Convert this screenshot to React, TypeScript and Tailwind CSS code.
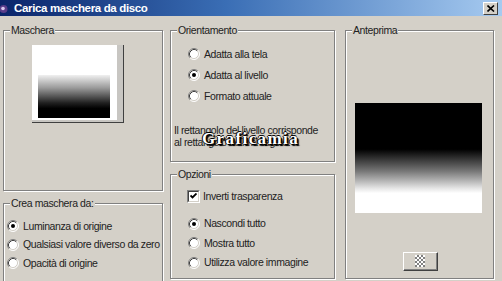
import React from "react";

const Radio = ({ checked = false }: { checked?: boolean }) => (
  <svg width="12" height="12" viewBox="0 0 12 12" className="shrink-0">
    <circle cx="6" cy="6" r="5" fill="#fff" />
    <path d="M2.11 9.89 A5.5 5.5 0 0 1 9.89 2.11" stroke="#808080" fill="none" />
    <path d="M2.82 9.18 A4.5 4.5 0 0 1 9.18 2.82" stroke="#404040" fill="none" />
    <path d="M9.89 2.11 A5.5 5.5 0 0 1 2.11 9.89" stroke="#fff" fill="none" />
    <path d="M9.18 2.82 A4.5 4.5 0 0 1 2.82 9.18" stroke="#d4d0c8" fill="none" />
    {checked && <circle cx="6" cy="6" r="2" fill="#000" />}
  </svg>
);

const Check = () => (
  <div className="w-[13px] h-[13px] shrink-0 border border-t-[#808080] border-l-[#808080] border-r-white border-b-white">
    <div className="w-full h-full border border-t-[#404040] border-l-[#404040] border-r-[#d4d0c8] border-b-[#d4d0c8] bg-white flex items-center justify-center">
      <svg width="7" height="7" viewBox="0 0 7 7">
        <path d="M0.5 2.5 L2.5 4.5 L6.5 0.5" stroke="#000" strokeWidth="1.8" fill="none" />
      </svg>
    </div>
  </div>
);

const Group = ({
  label,
  className,
  children,
}: {
  label: string;
  className: string;
  children?: React.ReactNode;
}) => (
  <div
    className={`relative border border-[#808080] shadow-[inset_1px_1px_0_#fff,1px_1px_0_#fff] ${className}`}
  >
    <span className="absolute left-[6px] top-[-7px] px-[1px] bg-[#d4d0c8] leading-[13px] whitespace-nowrap">
      {label}
    </span>
    {children}
  </div>
);

const Opt = ({
  children,
  checked = false,
  h,
  gap,
}: {
  children: React.ReactNode;
  checked?: boolean;
  h: string;
  gap: string;
}) => (
  <div className={`flex items-center ${h} ${gap} whitespace-nowrap`}>
    <Radio checked={checked} />
    <span className="leading-[13px]">{children}</span>
  </div>
);

export default function App() {
  return (
    <div className="w-[502px] h-[281px] overflow-hidden bg-[#d4d0c8] text-[#222] text-[10.5px] tracking-[-0.4px] font-['Liberation_Sans',Arial,sans-serif]">
      {/* Title bar */}
      <div className="h-[16px] flex items-center bg-[linear-gradient(to_right,#0a246a_0%,#3a6eb5_45%,#a6caf0_100%)]">
        <svg width="9" height="10" viewBox="0 0 9 10" className="shrink-0 mt-[1px]">
          <circle cx="3.5" cy="5" r="4" fill="#5a3d8a" />
          <circle cx="3" cy="4.5" r="1.8" fill="#d8c8f0" />
        </svg>
        <span className="ml-[5px] text-white font-bold text-[11.5px] tracking-[-0.35px] leading-[14px]">
          Carica maschera da disco
        </span>
        <div className="ml-auto mr-[4px] w-[15px] h-[13px] bg-[#d4d0c8] border border-t-white border-l-white border-r-[#404040] border-b-[#404040] flex items-center justify-center">
          <svg width="8" height="7" viewBox="0 0 8 7">
            <path d="M0.5 0.5 L7 6.5 M7 0.5 L0.5 6.5" stroke="#000" strokeWidth="1.6" />
          </svg>
        </div>
      </div>

      {/* Body */}
      <div className="flex pl-[3px] pt-[14px]">
        {/* Column 1 */}
        <div className="w-[160px] flex flex-col shrink-0">
          <Group label="Maschera" className="h-[161px] pl-[28px] pt-[14px]">
            <div className="w-[92px] h-[78px] bg-white border-r border-b border-r-[#404040] border-b-[#404040]">
              <div className="w-full h-full border-r-[6px] border-b-[2px] border-r-[#c8c6c2] border-b-[#c8c6c2] pl-[6px] pt-[30px]">
                <div className="w-[72px] h-[43px] bg-[linear-gradient(to_bottom,#f0f0f0_0%,#9a9a9a_30%,#202020_65%,#000_78%,#000_100%)]" />
              </div>
            </div>
          </Group>
          <Group label="Crea maschera da:" className="mt-[12px] h-[100px] pl-[3px] pt-[13px]">
            <Opt checked h="h-[18.5px]" gap="gap-[4px]">Luminanza di origine</Opt>
            <Opt h="h-[18.5px]" gap="gap-[4px]">Qualsiasi valore diverso da zero</Opt>
            <Opt h="h-[18.5px]" gap="gap-[4px]">Opacità di origine</Opt>
          </Group>
        </div>

        {/* Column 2 */}
        <div className="ml-[7px] w-[165px] flex flex-col shrink-0">
          <Group label="Orientamento" className="h-[132px] pl-[17px] pt-[12.5px]">
            <Opt h="h-[21px]" gap="gap-[4px]">Adatta alla tela</Opt>
            <Opt checked h="h-[21px]" gap="gap-[4px]">Adatta al livello</Opt>
            <Opt h="h-[21px]" gap="gap-[4px]">Formato attuale</Opt>
            <p className="ml-[-14px] mt-[17px] leading-[12px] whitespace-nowrap">
              Il rettangolo del livello corrisponde
              <br />
              al rettangolo dell'immagine.
            </p>
            <span className="absolute left-[31px] top-[99px] text-white font-bold text-[17px] tracking-[1.4px] leading-[17px] font-['Liberation_Serif',serif] [text-shadow:1px_1px_0_#000,-1px_0_0_#000,0_-1px_0_#000,2px_2px_1px_#000]">
              Graficamia
            </span>
          </Group>
          <Group label="Opzioni" className="mt-[12px] h-[105px] pl-[16px] pt-[11px]">
            <div className="flex items-center h-[20px] gap-[3px] whitespace-nowrap">
              <Check />
              <span className="leading-[13px]">Inverti trasparenza</span>
            </div>
            <div className="h-[8px]" />
            <div className="pl-[1px]">
              <Opt checked h="h-[19.5px]" gap="gap-[4px]">Nascondi tutto</Opt>
              <Opt h="h-[19.5px]" gap="gap-[4px]">Mostra tutto</Opt>
              <Opt h="h-[19.5px]" gap="gap-[4px]">Utilizza valore immagine</Opt>
            </div>
          </Group>
        </div>

        {/* Column 3 */}
        <div className="ml-[10px] w-[149px] shrink-0">
          <Group label="Anteprima" className="h-[249px] pl-[9px] pt-[72px]">
            <div className="w-[127px] h-[110px] bg-[linear-gradient(to_bottom,#000_0%,#000_42%,#777_62%,#e8e8e8_78%,#fff_82%,#fff_100%)]" />
            <div className="ml-[48px] mt-[39px] w-[35px] h-[19px] border border-t-white border-l-white border-r-[#404040] border-b-[#404040]">
              <div className="w-full h-full border-r border-b border-r-[#808080] border-b-[#808080] flex items-center justify-center">
                <svg width="10" height="12" viewBox="0 0 10 12">
                  <rect x="0" y="0" width="10" height="12" fill="#fff" />
                  <rect x="2" y="0" width="2" height="2" fill="#808080" />
                  <rect x="6" y="0" width="2" height="2" fill="#808080" />
                  <rect x="0" y="2" width="2" height="2" fill="#808080" />
                  <rect x="4" y="2" width="2" height="2" fill="#808080" />
                  <rect x="8" y="2" width="2" height="2" fill="#808080" />
                  <rect x="2" y="4" width="2" height="2" fill="#808080" />
                  <rect x="6" y="4" width="2" height="2" fill="#808080" />
                  <rect x="0" y="6" width="2" height="2" fill="#808080" />
                  <rect x="4" y="6" width="2" height="2" fill="#808080" />
                  <rect x="8" y="6" width="2" height="2" fill="#808080" />
                  <rect x="2" y="8" width="2" height="2" fill="#808080" />
                  <rect x="6" y="8" width="2" height="2" fill="#808080" />
                  <rect x="0" y="10" width="2" height="2" fill="#808080" />
                  <rect x="4" y="10" width="2" height="2" fill="#808080" />
                  <rect x="8" y="10" width="2" height="2" fill="#808080" />
                </svg>
              </div>
            </div>
          </Group>
        </div>
      </div>
    </div>
  );
}
